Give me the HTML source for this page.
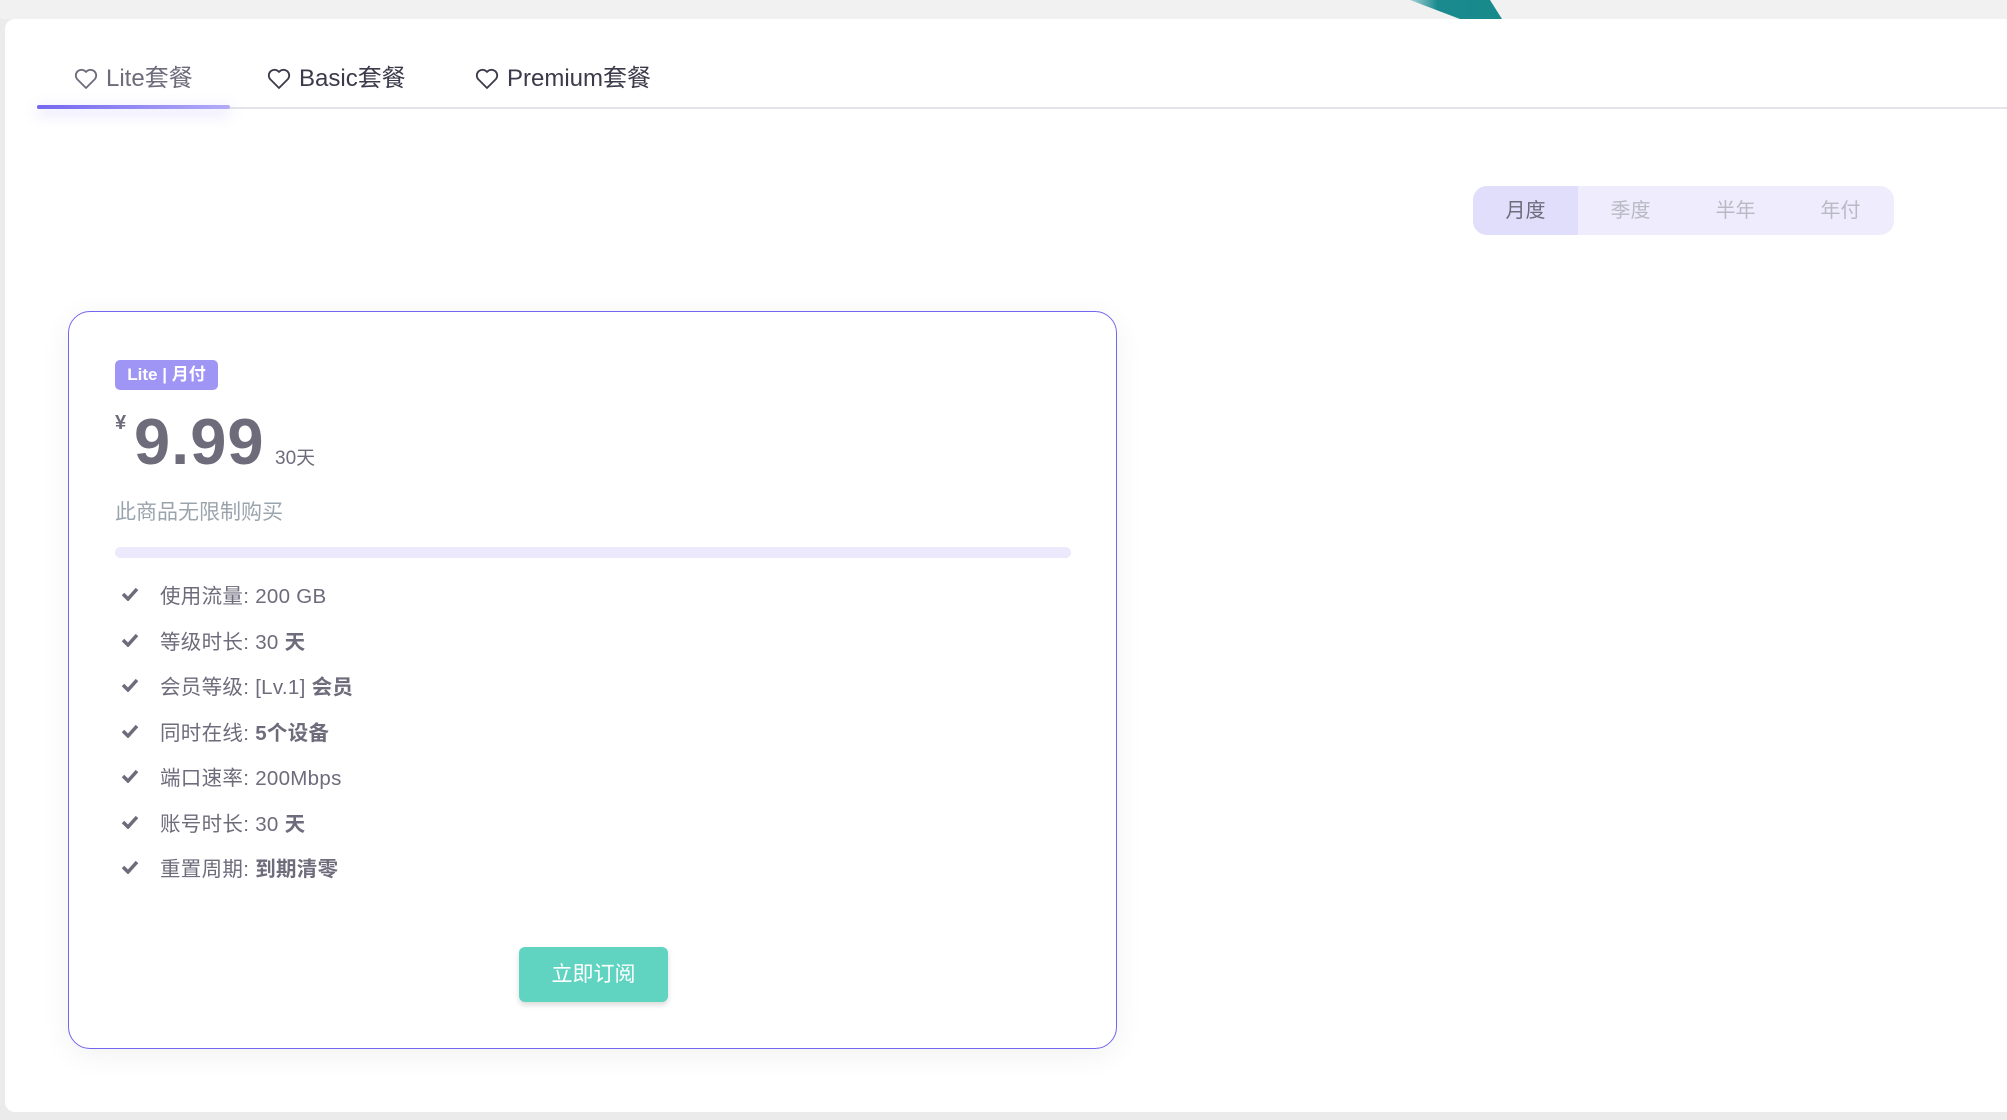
<!DOCTYPE html>
<html><head><meta charset="utf-8"><style>
*{margin:0;padding:0;box-sizing:border-box}
body{width:2007px;height:1120px;overflow:hidden;background:#ebebeb;font-family:"Liberation Sans","Noto Sans CJK SC",sans-serif;position:relative}
.top{position:absolute;left:0;top:0;width:2007px;height:19px;background:#f1f1f1;overflow:hidden}
.panel{position:absolute;left:5px;top:19px;width:2002px;height:1093px;background:#fff;border-radius:10px 0 0 10px}
.tab{position:absolute;top:63px;font-size:24px;color:#3b3a4a;display:flex;align-items:center;line-height:32px}
.tab svg{margin-right:8px}
.line{position:absolute;left:37px;right:0;top:107px;height:2px;background:#e4e4ea}
.ul{position:absolute;left:37px;top:105px;width:193px;height:4px;background:linear-gradient(90deg,#7367f0,#b3abf7);box-shadow:0 4px 14px rgba(115,103,240,.35);border-radius:2px}
.tog{position:absolute;left:1473px;top:186px;width:421px;height:49px;background:#efedfd;border-radius:14px;display:flex;font-size:20px;color:#b9b9c3}
.tog div{width:105px;text-align:center;line-height:51px}
.tog .a{background:#e0defb;color:#6e6b7b;border-radius:14px 0 0 14px}
.card{position:absolute;left:68px;top:311px;width:1049px;height:738px;border:1px solid #7367f0;border-radius:22px;box-shadow:0 6px 30px rgba(0,0,0,.06);background:#fff}
.badge{position:absolute;left:46px;top:48px;width:103px;height:30px;background:#9e95f5;border-radius:5px;color:#fff;font-weight:bold;font-size:17px;line-height:30px;text-align:center}
.yen{position:absolute;left:46px;top:100px;font-size:20px;font-weight:bold;color:#6e6b7b}
.price{position:absolute;left:65px;top:90px;font-size:65px;font-weight:bold;color:#6e6b7b;line-height:80px;letter-spacing:1px}
.days{position:absolute;left:206px;top:131px;font-size:19px;color:#6e6b7b}
.desc{position:absolute;left:46px;top:184px;font-size:21px;color:#9aa4ad}
.bar{position:absolute;left:46px;top:235px;width:956px;height:11px;background:#ebe9fb;border-radius:6px}
.f{position:absolute;left:52px;font-size:20.5px;color:#6e6b7b;display:flex;align-items:center;height:30px;letter-spacing:.3px}
.f svg{margin-right:21px}
.f b{margin-left:6px}
.btn{position:absolute;left:450px;top:635px;width:149px;height:55px;background:#61d4c1;border-radius:6px;color:#fff;font-size:21px;text-align:center;line-height:55px;box-shadow:0 3px 6px rgba(0,0,0,.15)}
</style></head><body>
<div class="top"><svg width="2007" height="19"><defs><linearGradient id="g" x1="0" x2="1"><stop offset="0" stop-color="#a6d4d6"/><stop offset=".3" stop-color="#1a8a8e"/><stop offset="1" stop-color="#178a8c"/></linearGradient></defs><polygon points="1410,0 1490,0 1502,19 1460,19" fill="url(#g)"/></svg></div>
<div class="panel"></div>
<div class="tab" style="left:74px;color:#6e6b7b"><svg width="24" height="22" viewBox="0 0 24 22"><path d="M12 20 L3 11 A5 5 0 0 1 12 4 A5 5 0 0 1 21 11 Z" fill="none" stroke="currentColor" stroke-width="1.8" stroke-linejoin="round"/></svg>Lite套餐</div>
<div class="tab" style="left:267px"><svg width="24" height="22" viewBox="0 0 24 22"><path d="M12 20 L3 11 A5 5 0 0 1 12 4 A5 5 0 0 1 21 11 Z" fill="none" stroke="currentColor" stroke-width="1.8" stroke-linejoin="round"/></svg>Basic套餐</div>
<div class="tab" style="left:475px"><svg width="24" height="22" viewBox="0 0 24 22"><path d="M12 20 L3 11 A5 5 0 0 1 12 4 A5 5 0 0 1 21 11 Z" fill="none" stroke="currentColor" stroke-width="1.8" stroke-linejoin="round"/></svg>Premium套餐</div>
<div class="line"></div><div class="ul"></div>
<div class="tog"><div class="a">月度</div><div>季度</div><div>半年</div><div>年付</div></div>
<div class="card">
<div class="badge">Lite | 月付</div>
<div class="yen">¥</div>
<div class="price">9.99</div>
<div class="days">30天</div>
<div class="desc">此商品无限制购买</div>
<div class="bar"></div>
<div class="f" style="top:267px"><svg width="18" height="14" viewBox="0 0 18 14"><path d="M2 7 L7 12 L16 2" fill="none" stroke="#6e6b7b" stroke-width="3.5"/></svg>使用流量: 200 GB</div>
<div class="f" style="top:313px"><svg width="18" height="14" viewBox="0 0 18 14"><path d="M2 7 L7 12 L16 2" fill="none" stroke="#6e6b7b" stroke-width="3.5"/></svg>等级时长: 30<b>天</b></div>
<div class="f" style="top:358px"><svg width="18" height="14" viewBox="0 0 18 14"><path d="M2 7 L7 12 L16 2" fill="none" stroke="#6e6b7b" stroke-width="3.5"/></svg>会员等级: [Lv.1]<b>会员</b></div>
<div class="f" style="top:404px"><svg width="18" height="14" viewBox="0 0 18 14"><path d="M2 7 L7 12 L16 2" fill="none" stroke="#6e6b7b" stroke-width="3.5"/></svg>同时在线:<b>5个设备</b></div>
<div class="f" style="top:449px"><svg width="18" height="14" viewBox="0 0 18 14"><path d="M2 7 L7 12 L16 2" fill="none" stroke="#6e6b7b" stroke-width="3.5"/></svg>端口速率: 200Mbps</div>
<div class="f" style="top:495px"><svg width="18" height="14" viewBox="0 0 18 14"><path d="M2 7 L7 12 L16 2" fill="none" stroke="#6e6b7b" stroke-width="3.5"/></svg>账号时长: 30<b>天</b></div>
<div class="f" style="top:540px"><svg width="18" height="14" viewBox="0 0 18 14"><path d="M2 7 L7 12 L16 2" fill="none" stroke="#6e6b7b" stroke-width="3.5"/></svg>重置周期:<b>到期清零</b></div>
<div class="btn">立即订阅</div>
</div>
</body></html>
